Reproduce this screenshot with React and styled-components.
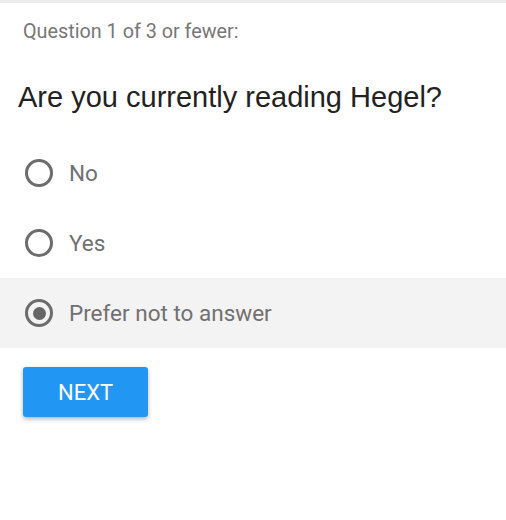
import React, { useState } from "react";
import styled, { createGlobalStyle } from "styled-components";

const Global = createGlobalStyle`
  html, body { margin: 0; padding: 0; background: #fff; }
  body { font-family: Roboto, "Noto Sans", Arial, sans-serif; }
`;

const Page = styled.div`
  width: 506px;
  height: 520px;
  box-sizing: border-box;
  border-top: 3px solid #ececec;
  padding-top: 17px;
`;

const Counter = styled.div`
  padding-left: 23px;
  font-size: 19.8px;
  color: #777;
  line-height: 24px;
`;

const Question = styled.h1`
  margin: 36px 0 0 0;
  padding-left: 18px;
  font-family: "Liberation Sans", Arial, sans-serif;
  font-size: 29px;
  font-weight: 400;
  color: #222;
  line-height: 34px;
`;

const Options = styled.div`
  margin-top: 24px;
  display: flex;
  flex-direction: column;
`;

const Row = styled.label`
  display: flex;
  align-items: center;
  height: 70px;
  padding-left: 25px;
  background: ${(p) => (p.$selected ? "#f3f3f3" : "transparent")};
  cursor: pointer;
`;

const Circle = styled.span`
  box-sizing: border-box;
  width: 28px;
  height: 28px;
  border-radius: 50%;
  border: 3px solid #6c6c6c;
  display: flex;
  align-items: center;
  justify-content: center;
  margin-right: 16px;
  &::after {
    content: "";
    width: 13px;
    height: 13px;
    border-radius: 50%;
    background: ${(p) => (p.$on ? "#666" : "transparent")};
  }
`;

const OptionText = styled.span`
  font-size: 22.5px;
  color: #707070;
`;

const Button = styled.button`
  margin: 19px 0 0 23px;
  width: 125px;
  height: 50px;
  border: none;
  border-radius: 3px;
  background: #2196f3;
  color: #fff;
  font-family: Roboto, Arial, sans-serif;
  font-size: 22px;
  box-shadow: 0 2px 4px rgba(0, 0, 0, 0.3);
  cursor: pointer;
`;

const options = ["No", "Yes", "Prefer not to answer"];

export default function App() {
  const [sel, setSel] = useState(2);
  return (
    <>
      <Global />
      <Page>
        <Counter>Question 1 of 3 or fewer:</Counter>
        <Question>Are you currently reading Hegel?</Question>
        <Options>
          {options.map((o, i) => (
            <Row key={o} $selected={sel === i} onClick={() => setSel(i)}>
              <Circle $on={sel === i} />
              <OptionText>{o}</OptionText>
            </Row>
          ))}
        </Options>
        <Button>NEXT</Button>
      </Page>
    </>
  );
}
